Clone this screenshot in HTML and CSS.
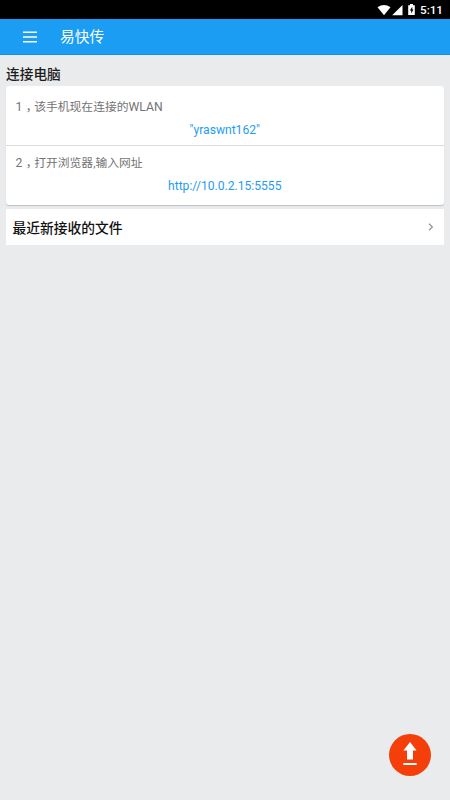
FILE: index.html
```
<!DOCTYPE html>
<html lang="zh-CN">
<head>
<meta charset="utf-8">
<title>易快传</title>
<link rel="stylesheet" href="styles.css">
</head>
<body>
<div class="status">
  <svg class="status-icons" width="42" height="18" viewBox="0 0 42 18">
    <path d="M0.5 6.2Q7 1.8 13.5 6.2L7 14.2Z"/>
    <path d="M25.5 4V14.2H15.2Z"/>
    <path fill-rule="evenodd" d="M31.2 4.2H33V3H36V4.2H37.8V14H31.2ZM35.3 5.8L32.8 9.6H34.2V12.4L36.5 8.6H35.3Z"/>
  </svg>
  <span class="clock">5:11</span>
</div>
<header class="bar">
  <svg class="menu" width="14" height="12" viewBox="0 0 14 12"><path d="M0 1.3H14M0 6H14M0 10.7H14"/></svg>
  <h1 class="title">易快传</h1>
</header>
<main class="content">
  <h2 class="heading">连接电脑</h2>
  <section class="card">
    <div class="step">
      <p class="label"><span class="latin">1</span><span class="comma">，</span>该手机现在连接的<span class="latin">WLAN</span></p>
      <p class="value">"yraswnt162"</p>
    </div>
    <div class="step">
      <p class="label"><span class="latin">2</span><span class="comma">，</span>打开浏览器,输入网址</p>
      <p class="value">http://10.0.2.15:5555</p>
    </div>
  </section>
  <div class="row">
    <span>最近新接收的文件</span>
    <svg width="6" height="8" viewBox="0 0 6 8"><path d="M1 0.8L4.4 4L1 7.2"/></svg>
  </div>
</main>
<button class="fab" aria-label="上传">
  <svg width="14" height="24" viewBox="0 0 14 24"><path d="M7 0L13.6 8.6H10V17.4H4V8.6H0.4ZM0.3 21H13.7V23H0.3Z"/></svg>
</button>
</body>
</html>
```
FILE: styles.css
```
* { box-sizing: border-box; margin: 0; padding: 0; }
body {
  height: 800px;
  overflow: hidden;
  background: #e9ebed;
  font-family: Roboto, "Noto Sans CJK SC", sans-serif;
}
.status {
  height: 19px;
  background: #000;
  display: flex;
  justify-content: flex-end;
  align-items: center;
  padding-right: 8px;
  gap: 1px;
}
.status-icons { fill: #fff; }
.clock { width: 22px; color: #fff; font-size: 11.7px; font-weight: 500; line-height: 18px; white-space: nowrap; }
.bar {
  height: 36px;
  background: #1b9df4;
  border-bottom: 1px solid #1590e4;
  display: flex;
  align-items: center;
  padding-left: 23px;
}
.menu { stroke: #fff; stroke-width: 1.5; fill: none; margin-top: 1px; }
.title { margin-left: 23px; color: #fff; font-size: 14.7px; line-height: 20px; font-weight: 400; }
.content { padding: 9px 6px 0; }
.heading { font-size: 13.7px; font-weight: 500; line-height: 20px; color: #1c1c1c; height: 22px; }
.card {
  height: 119px;
  background: #fff;
  border-radius: 3px;
  box-shadow: 0 1px 1px #bfc2c5;
}
.step { height: 59px; padding: 11px 10px 0 9.5px; line-height: 18px; }
.step + .step { border-top: 1px solid #dcdcdc; height: 60px; padding-top: 7px; }
.label { height: 18px; font-size: 11.8px; color: #737373; white-space: nowrap; }
.latin { font-size: 12.2px; }
.comma {
  margin: 0 2.4px 0 3.5px;
  font-family: "Noto Sans CJK SC", sans-serif;
  font-feature-settings: "halt";
}
.value { font-size: 12.1px; color: #1e9cf0; text-align: center; margin-top: 6px; }
.row {
  margin-top: 4px;
  height: 36px;
  background: #fff;
  display: flex;
  justify-content: space-between;
  align-items: center;
  padding: 0 10px 0 6.5px;
  font-size: 13.75px;
  font-weight: 500;
  color: #111;
}
.row svg { fill: none; stroke: #929292; stroke-width: 1.2; }
.fab {
  position: absolute;
  left: 389px;
  top: 733.5px;
  width: 42px;
  height: 42px;
  border: 0;
  border-radius: 50%;
  background: #f53f0b;
  display: flex;
  align-items: center;
  justify-content: center;
}
.fab svg { fill: #fff; margin-bottom: 2px; }
```
